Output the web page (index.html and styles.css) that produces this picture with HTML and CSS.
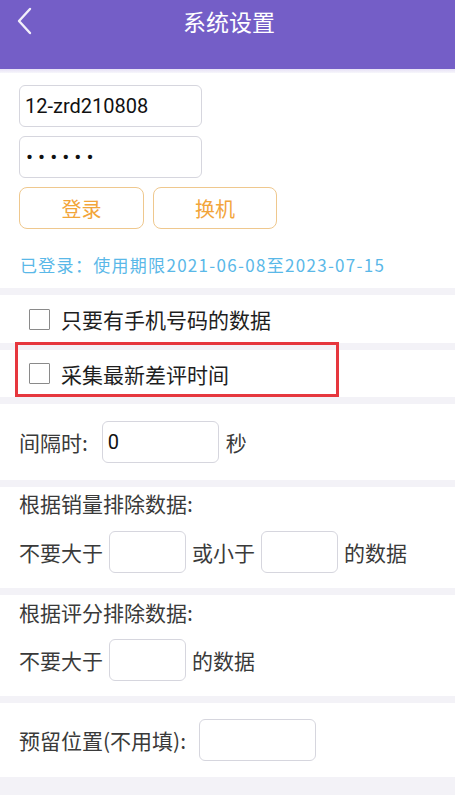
FILE: index.html
```html
<!DOCTYPE html>
<html lang="zh-CN">
<head>
<meta charset="utf-8">
<title>系统设置</title>
<link rel="stylesheet" href="styles.css">
</head>
<body>
<header class="topbar">
  <svg class="back" width="18" height="28" viewBox="0 0 18 28"><path d="M14 2 L3 14 L14 26" fill="none" stroke="#f2effa" stroke-width="2.4" stroke-linecap="round" stroke-linejoin="round"/></svg>
  <h1 class="title">系统设置</h1>
</header>
<div class="topline"></div>
<main class="page">
  <section class="card login">
    <input class="field wide" type="text" value="12-zrd210808">
    <input class="field wide pwd" type="password" value="123456">
    <div class="btns">
      <button class="obtn first">登录</button>
      <button class="obtn">换机</button>
    </div>
    <p class="status">已登录：使用期限2021-06-08至2023-07-15</p>
  </section>
  <section class="card check-row r1">
    <span class="box"></span><span class="ctext">只要有手机号码的数据</span>
  </section>
  <section class="card check-row r2 marked">
    <span class="box"></span><span class="ctext">采集最新差评时间</span>
  </section>
  <section class="card inline-row interval">
    <span class="lbl colon">间隔时:</span>
    <input class="field mid" type="text" value="0">
    <span class="lbl after">秒</span>
  </section>
  <section class="card block sales">
    <div class="lbl head">根据销量排除数据:</div>
    <div class="row">
      <span class="lbl">不要大于</span>
      <input class="field small" type="text">
      <span class="lbl">或小于</span>
      <input class="field small" type="text">
      <span class="lbl">的数据</span>
    </div>
  </section>
  <section class="card block score">
    <div class="lbl head">根据评分排除数据:</div>
    <div class="row">
      <span class="lbl">不要大于</span>
      <input class="field small" type="text">
      <span class="lbl">的数据</span>
    </div>
  </section>
  <section class="card inline-row reserve">
    <span class="lbl colon2">预留位置(不用填):</span>
    <input class="field mid" type="text">
  </section>
</main>
</body>
</html>
```

FILE: styles.css
```css
*, *::before, *::after { box-sizing: border-box; }
html, body { margin: 0; padding: 0; }
body {
  width: 455px;
  height: 795px;
  overflow: hidden;
  background: #f3f2f7;
  font-family: "Noto Sans CJK SC", sans-serif;
  color: #333;
}
.topbar {
  height: 69px;
  background: #745ec7;
  position: relative;
  display: flex;
  justify-content: center;
  padding-top: 5px;
  padding-left: 3px;
}
.back { position: absolute; left: 16px; top: 7px; }
.title {
  margin: 0;
  font-size: 23px;
  font-weight: 400;
  color: #fff;
  line-height: 32px;
  height: 32px;
}
.topline {
  height: 4px;
  background: linear-gradient(#e6e1f6, #f7f6fb);
}
.page {
  display: flex;
  flex-direction: column;
  gap: 7px;
}
.card { background: #fff; }
.login {
  height: 215px;
  padding: 12px 19px 0;
  display: flex;
  flex-direction: column;
  align-items: flex-start;
}
.field {
  border: 1.5px solid #d6d6de;
  border-radius: 6px;
  background: #fff;
  font-family: Roboto, "Noto Sans CJK SC", sans-serif;
  font-size: 20px;
  color: #111;
  padding: 0 5px;
  outline: none;
}
.wide { width: 183px; height: 42px; }
.pwd { margin-top: 9px; font-size: 21px; letter-spacing: 5px; padding-left: 6px; }
.btns { display: flex; gap: 9px; margin-top: 9px; }
.obtn {
  width: 125px;
  height: 42px;
  border: 1.5px solid #efc88e;
  border-radius: 8px;
  background: #fff;
  color: #f2a53a;
  font-family: "Noto Sans CJK SC", sans-serif;
  font-size: 20px;
  padding: 0;
}
.obtn + .obtn { width: 124px; }
.status {
  margin: 24px 0 0 1px;
  font-size: 17px;
  line-height: 24px;
  color: #5ab8e8;
  letter-spacing: 1.3px;
  white-space: nowrap;
}
.check-row {
  display: flex;
  align-items: center;
  padding-left: 29px;
}
.r1 { height: 48px; }
.r2 { height: 47px; }
.box {
  width: 21px;
  height: 21px;
  border: 1.5px solid #8a8a8a;
  border-radius: 1px;
  margin-right: 11px;
}
.ctext { font-size: 21px; color: #1e1e1e; line-height: 24px; }
.marked { position: relative; }
.marked::after {
  content: "";
  position: absolute;
  left: 15px;
  top: -8px;
  width: 324px;
  height: 55px;
  border: 3px solid #e6373e;
}
.lbl { font-size: 21px; line-height: 24px; color: #3a3a3a; white-space: nowrap; }
.inline-row {
  display: flex;
  align-items: center;
  padding-left: 19px;
}
.interval { height: 76px; }
.reserve { height: 74px; }
.colon { margin-right: 14px; }
.colon2 { margin-right: 13px; }
.after { margin-left: 7px; }
.mid { width: 117px; height: 42px; }
.block { padding-left: 19px; }
.sales { height: 101px; padding-top: 4px; }
.score { height: 101px; padding-top: 5px; }
.row {
  display: flex;
  align-items: center;
  gap: 6px;
  margin-top: 16px;
}
.score .row { margin-top: 15px; }
.small { width: 77px; height: 42px; }
```
